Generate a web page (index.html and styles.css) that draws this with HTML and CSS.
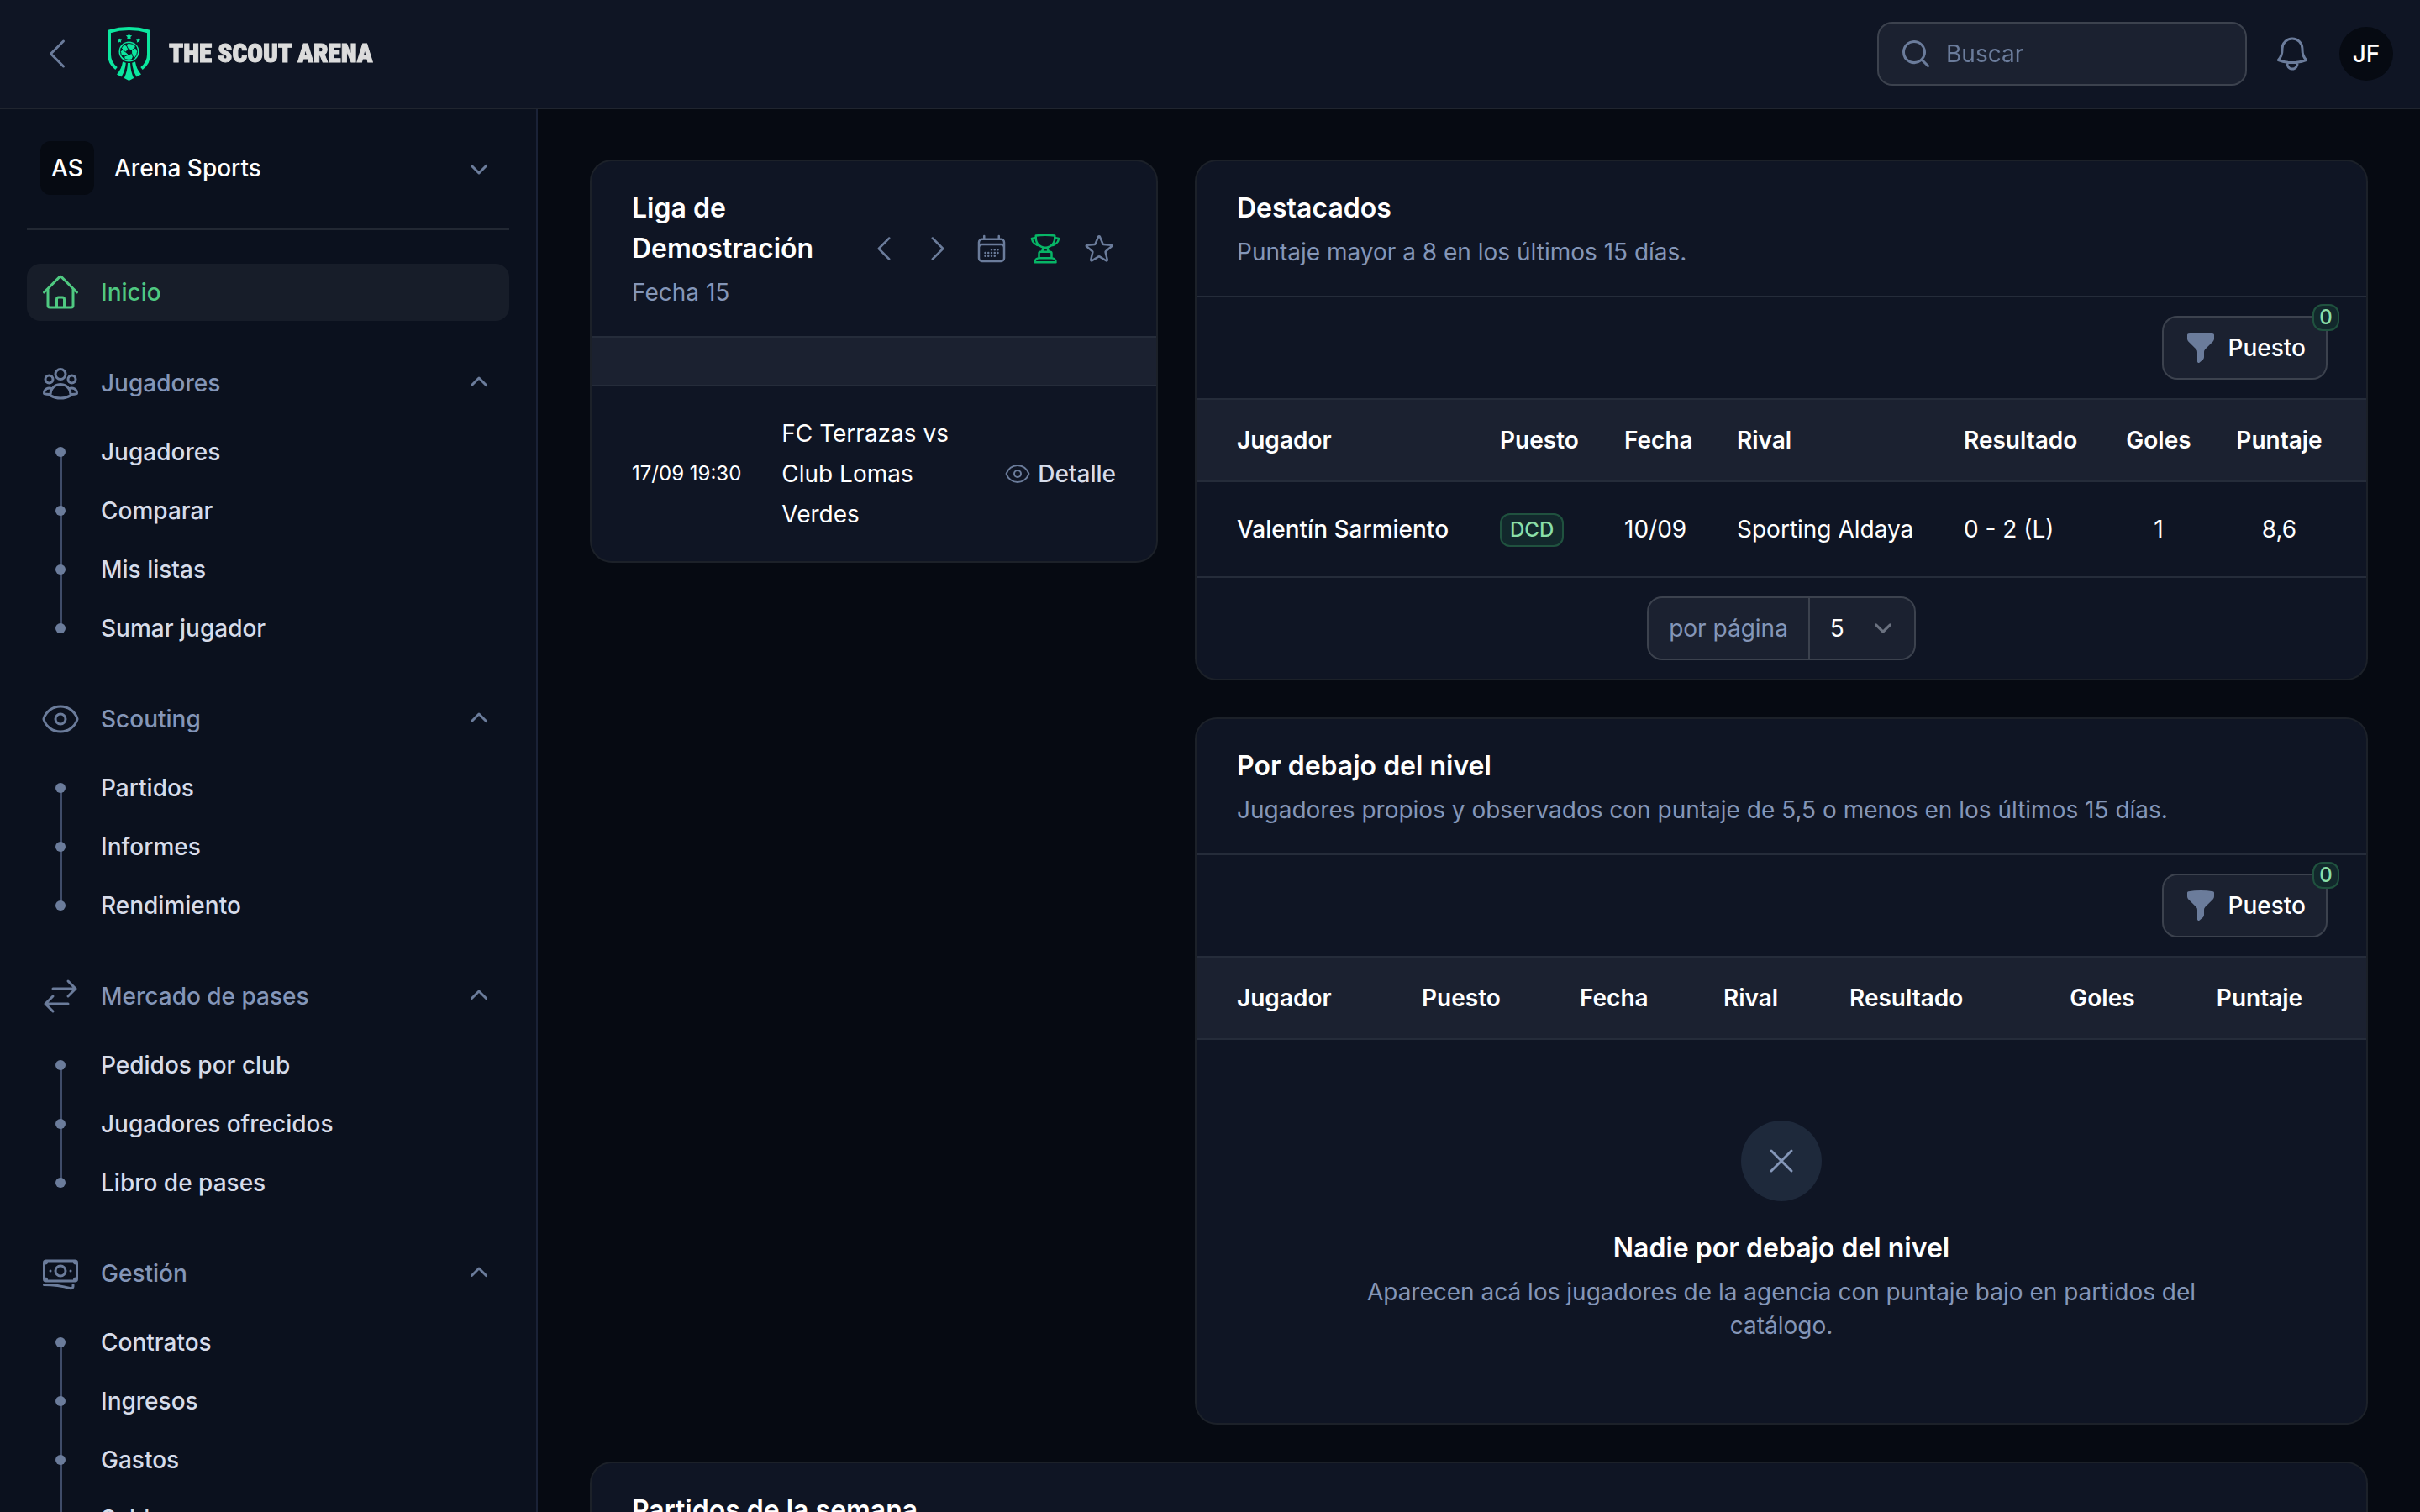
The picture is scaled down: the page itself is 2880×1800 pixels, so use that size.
FILE: index.html
```html
<!DOCTYPE html>
<html lang="es">
<head>
<meta charset="utf-8">
<meta name="viewport" content="width=device-width, initial-scale=1">
<title>Inicio - The Scout Arena</title>
<link rel="stylesheet" href="styles.css">
</head>
<body>
<svg class="sprite" aria-hidden="true">
  <symbol id="i-left" viewBox="0 0 24 24"><path d="M15.75 19.5 8.25 12l7.5-7.5"/></symbol>
  <symbol id="i-right" viewBox="0 0 24 24"><path d="m8.25 4.5 7.5 7.5-7.5 7.5"/></symbol>
  <symbol id="i-bell" viewBox="0 0 24 24"><path d="M14.857 17.082a23.848 23.848 0 0 0 5.454-1.31A8.967 8.967 0 0 1 18 9.75V9A6 6 0 0 0 6 9v.75a8.967 8.967 0 0 1-2.312 6.022c1.733.64 3.56 1.085 5.455 1.31m5.714 0a24.255 24.255 0 0 1-5.714 0m5.714 0a3 3 0 1 1-5.714 0"/></symbol>
  <symbol id="i-home" viewBox="0 0 24 24"><path d="m2.25 12 8.954-8.955c.44-.439 1.152-.439 1.591 0L21.75 12M4.5 9.75v10.125c0 .621.504 1.125 1.125 1.125H9.75v-4.875c0-.621.504-1.125 1.125-1.125h2.25c.621 0 1.125.504 1.125 1.125V21h4.125c.621 0 1.125-.504 1.125-1.125V9.75M8.25 21h8.25"/></symbol>
  <symbol id="i-users" viewBox="0 0 24 24"><path d="M18 18.72a9.094 9.094 0 0 0 3.741-.479 3 3 0 0 0-4.682-2.72m.94 3.198.001.031c0 .225-.012.447-.037.666A11.944 11.944 0 0 1 12 21c-2.17 0-4.207-.576-5.963-1.584A6.062 6.062 0 0 1 6 18.719m12 0a5.971 5.971 0 0 0-.941-3.197m0 0A5.995 5.995 0 0 0 12 12.75a5.995 5.995 0 0 0-5.058 2.772m0 0a3 3 0 0 0-4.681 2.72 8.986 8.986 0 0 0 3.74.477m.94-3.197a5.971 5.971 0 0 0-.94 3.197M15 6.75a3 3 0 1 1-6 0 3 3 0 0 1 6 0Zm6 3a2.25 2.25 0 1 1-4.5 0 2.25 2.25 0 0 1 4.5 0Zm-13.5 0a2.25 2.25 0 1 1-4.5 0 2.25 2.25 0 0 1 4.5 0Z"/></symbol>
  <symbol id="i-eye" viewBox="0 0 24 24"><path d="M2.036 12.322a1.012 1.012 0 0 1 0-.639C3.423 7.51 7.36 4.5 12 4.5c4.638 0 8.573 3.007 9.963 7.178.07.207.07.431 0 .639C20.577 16.49 16.64 19.5 12 19.5c-4.638 0-8.573-3.007-9.963-7.178Z"/><path d="M15 12a3 3 0 1 1-6 0 3 3 0 0 1 6 0Z"/></symbol>
  <symbol id="i-swap" viewBox="0 0 24 24"><path d="M7.5 21 3 16.5m0 0L7.5 12M3 16.5h13.5m0-13.5L21 7.5m0 0L16.5 12M21 7.5H7.5"/></symbol>
  <symbol id="i-cash" viewBox="0 0 24 24"><path d="M2.25 18.75a60.07 60.07 0 0 1 15.797 2.101c.727.198 1.453-.342 1.453-1.096V18.75M3.75 4.5v.75A.75.75 0 0 1 3 6h-.75m0 0v-.375c0-.621.504-1.125 1.125-1.125H20.25M2.25 6v9m18-10.5v.75c0 .414.336.75.75.75h.75m-1.5-1.5h.375c.621 0 1.125.504 1.125 1.125v9.75c0 .621-.504 1.125-1.125 1.125h-.375m1.5-1.5H21a.75.75 0 0 0-.75.75v.75m0 0H3.75m0 0h-.375a1.125 1.125 0 0 1-1.125-1.125V15m1.5 1.5v-.75A.75.75 0 0 0 3 15h-.75M15 10.5a3 3 0 1 1-6 0 3 3 0 0 1 6 0Zm3 0h.008v.008H18V10.5Zm-12 0h.008v.008H6V10.5Z"/></symbol>
  <symbol id="i-calendar" viewBox="0 0 24 24"><path d="M6.75 3v2.25M17.25 3v2.25M3 18.75V7.5a2.25 2.25 0 0 1 2.25-2.25h13.5A2.25 2.25 0 0 1 21 7.5v11.25m-18 0A2.25 2.25 0 0 0 5.25 21h13.5A2.25 2.25 0 0 0 21 18.75m-18 0v-7.5A2.25 2.25 0 0 1 5.25 9h13.5A2.25 2.25 0 0 1 21 11.25v7.5m-9-6h.008v.008H12v-.008ZM12 15h.008v.008H12V15Zm0 2.25h.008v.008H12v-.008ZM9.75 15h.008v.008H9.75V15Zm0 2.25h.008v.008H9.75v-.008ZM7.5 15h.008v.008H7.5V15Zm0 2.25h.008v.008H7.5v-.008Zm6.75-4.5h.008v.008h-.008v-.008Zm0 2.25h.008v.008h-.008V15Zm0 2.25h.008v.008h-.008v-.008Zm2.25-4.5h.008v.008H16.5v-.008Zm0 2.25h.008v.008H16.5V15Z"/></symbol>
  <symbol id="i-trophy" viewBox="0 0 24 24"><path d="M16.5 18.75h-9m9 0a3 3 0 0 1 3 3h-15a3 3 0 0 1 3-3m9 0v-3.375c0-.621-.503-1.125-1.125-1.125h-.871M7.5 18.75v-3.375c0-.621.504-1.125 1.125-1.125h.872m5.007 0H9.497m5.007 0a7.454 7.454 0 0 1-.982-3.172M9.497 14.25a7.454 7.454 0 0 0 .981-3.172M5.25 4.236c-.982.143-1.954.317-2.916.52A6.003 6.003 0 0 0 7.73 9.728M5.25 4.236V4.5c0 2.108.966 3.99 2.48 5.228M5.25 4.236V2.721C7.456 2.41 9.71 2.25 12 2.25c2.291 0 4.545.16 6.75.47v1.516M7.73 9.728a6.726 6.726 0 0 0 2.748 1.35m8.272-6.842V4.5c0 2.108-.966 3.99-2.48 5.228m2.48-5.492a46.32 46.32 0 0 1 2.916.52 6.003 6.003 0 0 1-5.395 4.972m0 0a6.726 6.726 0 0 1-2.749 1.35m0 0a6.772 6.772 0 0 1-3.044 0"/></symbol>
  <symbol id="i-star" viewBox="0 0 24 24"><path d="M11.48 3.499a.562.562 0 0 1 1.04 0l2.125 5.111a.563.563 0 0 0 .475.345l5.518.442c.499.04.701.663.321.988l-4.204 3.602a.563.563 0 0 0-.182.557l1.285 5.385a.562.562 0 0 1-.84.61l-4.725-2.885a.562.562 0 0 0-.586 0L6.982 20.54a.562.562 0 0 1-.84-.61l1.285-5.386a.562.562 0 0 0-.182-.557l-4.204-3.602a.562.562 0 0 1 .321-.988l5.518-.442a.563.563 0 0 0 .475-.345L11.48 3.5Z"/></symbol>
  <symbol id="i-x" viewBox="0 0 24 24"><path d="M6 18 18 6M6 6l12 12"/></symbol>
  <symbol id="i-search" viewBox="0 0 20 20"><path d="M9 3.5a5.5 5.5 0 1 0 0 11 5.5 5.5 0 0 0 0-11ZM2 9a7 7 0 1 1 12.452 4.391l3.328 3.329a.75.75 0 1 1-1.06 1.06l-3.329-3.328A7 7 0 0 1 2 9Z"/></symbol>
  <symbol id="i-down" viewBox="0 0 20 20"><path d="M5.22 8.22a.75.75 0 0 1 1.06 0L10 11.94l3.72-3.72a.75.75 0 1 1 1.06 1.06l-4.25 4.25a.75.75 0 0 1-1.06 0L5.22 9.28a.75.75 0 0 1 0-1.06Z"/></symbol>
  <symbol id="i-up" viewBox="0 0 20 20"><path d="M9.47 6.47a.75.75 0 0 1 1.06 0l4.25 4.25a.75.75 0 1 1-1.06 1.06L10 8.06l-3.72 3.72a.75.75 0 0 1-1.06-1.06l4.25-4.25Z"/></symbol>
  <symbol id="i-funnel" viewBox="0 0 20 20"><path d="M2.628 1.601C5.028 1.206 7.49 1 10 1s4.973.206 7.372.601a.75.75 0 0 1 .628.74v2.288a2.25 2.25 0 0 1-.659 1.59l-4.682 4.683a2.25 2.25 0 0 0-.659 1.59v3.037c0 .684-.31 1.33-.844 1.757l-1.937 1.55A.75.75 0 0 1 8 18.25v-5.757a2.25 2.25 0 0 0-.659-1.591L2.659 6.22A2.25 2.25 0 0 1 2 4.629V2.34a.75.75 0 0 1 .628-.74Z"/></symbol>
</svg>

<div class="app">
  <header class="topbar">
    <button class="icon-button" type="button" aria-label="Contraer barra lateral"><svg class="icon icon-lg"><use href="#i-left"/></svg></button>
    <a class="brand" href="#">
      <svg class="brand-mark" viewBox="0 0 51 64" aria-hidden="true">
        <path class="brand-shield" d="M10.500 49.500C4 44.500 2 39.500 2 33V5.500Q25.500 -1.300 49 5.500V33C49 39.500 47 44.500 40.500 49.500"/>
        <path d="m25.500 7.600 1.100 2.400 2.600.3-1.900 1.800.5 2.600-2.300-1.300-2.300 1.300.5-2.600-1.900-1.800 2.600-.3zM14.500 13.600l.8 1.700 1.900.2-1.400 1.300.4 1.900-1.700-.9-1.700.9.400-1.900-1.400-1.300 1.900-.2zM36.500 13.600l.8 1.700 1.900.2-1.400 1.300.4 1.900-1.700-.9-1.700.9.400-1.900-1.400-1.300 1.900-.2z"/>
        <circle cx="25.500" cy="29.500" r="12"/>
        <g class="brand-ball">
          <circle cx="25.500" cy="29.500" r="10"/>
          <path class="brand-ball-fill" d="m24.500 26.300 4 1.600.2 3.600-3.600 1.600-3.200-3zM19.600 20.600l3.600-.6-.6 2.600zM33.600 22.600l1.400 4-2.400-1.200zM32.500 37l-3.400 1.800 1.200-3zM19.800 37.400l-2.600-3.200 2.800.4zM16 28.400l.2-3.400 1.600 1.800z"/>
          <path d="m24.500 26.300-1.900-4M28.500 27.900l4.300-2.500M28.700 31.500l1.800 4.600M25.100 33.100 20 35M21.900 30.100l-4.300-3"/>
        </g>
        <path d="M24 43h3c.3 6.500 1.600 12.500 4.200 18L25.500 64l-5.700-3C22.400 55.500 23.700 49.500 24 43zM18 41.500l3.800 1.300C21.300 48.500 19.700 54.200 16.500 59.500L11 56.500C15 52 17.200 47 18 41.500zM33 41.500l-3.800 1.300c.5 5.700 2.100 11.400 5.300 16.700L40 56.500C36 52 33.800 47 33 41.500z"/>
      </svg>
      <span class="brand-name">THE SCOUT ARENA</span>
    </a>
    <div class="topbar-end">
      <label class="search">
        <svg class="icon-solid"><use href="#i-search"/></svg>
        <input type="search" placeholder="Buscar" aria-label="Buscar">
      </label>
      <button class="bell" type="button" aria-label="Notificaciones"><svg class="icon icon-lg"><use href="#i-bell"/></svg></button>
      <button class="avatar avatar-round" type="button">JF</button>
    </div>
  </header>

  <div class="body">
    <aside class="sidebar">
      <div class="tenant">
        <button class="tenant-button" type="button">
          <span class="avatar">AS</span>
          <span class="grow">Arena Sports</span>
          <svg class="icon-solid"><use href="#i-down"/></svg>
        </button>
      </div>
      <nav class="nav">
        <a class="nav-item nav-active" href="#"><svg class="icon icon-lg"><use href="#i-home"/></svg>Inicio</a>
        <section class="nav-group">
          <button class="nav-item nav-heading" type="button"><svg class="icon icon-lg"><use href="#i-users"/></svg><span class="grow">Jugadores</span><svg class="icon-solid"><use href="#i-up"/></svg></button>
          <ul>
            <li><a class="nav-item" href="#"><span class="dot"></span>Jugadores</a></li>
            <li><a class="nav-item" href="#"><span class="dot"></span>Comparar</a></li>
            <li><a class="nav-item" href="#"><span class="dot"></span>Mis listas</a></li>
            <li><a class="nav-item" href="#"><span class="dot"></span>Sumar jugador</a></li>
          </ul>
        </section>
        <section class="nav-group">
          <button class="nav-item nav-heading" type="button"><svg class="icon icon-lg"><use href="#i-eye"/></svg><span class="grow">Scouting</span><svg class="icon-solid"><use href="#i-up"/></svg></button>
          <ul>
            <li><a class="nav-item" href="#"><span class="dot"></span>Partidos</a></li>
            <li><a class="nav-item" href="#"><span class="dot"></span>Informes</a></li>
            <li><a class="nav-item" href="#"><span class="dot"></span>Rendimiento</a></li>
          </ul>
        </section>
        <section class="nav-group">
          <button class="nav-item nav-heading" type="button"><svg class="icon icon-lg"><use href="#i-swap"/></svg><span class="grow">Mercado de pases</span><svg class="icon-solid"><use href="#i-up"/></svg></button>
          <ul>
            <li><a class="nav-item" href="#"><span class="dot"></span>Pedidos por club</a></li>
            <li><a class="nav-item" href="#"><span class="dot"></span>Jugadores ofrecidos</a></li>
            <li><a class="nav-item" href="#"><span class="dot"></span>Libro de pases</a></li>
          </ul>
        </section>
        <section class="nav-group">
          <button class="nav-item nav-heading" type="button"><svg class="icon icon-lg"><use href="#i-cash"/></svg><span class="grow">Gestión</span><svg class="icon-solid"><use href="#i-up"/></svg></button>
          <ul>
            <li><a class="nav-item" href="#"><span class="dot"></span>Contratos</a></li>
            <li><a class="nav-item" href="#"><span class="dot"></span>Ingresos</a></li>
            <li><a class="nav-item" href="#"><span class="dot"></span>Gastos</a></li>
            <li><a class="nav-item" href="#"><span class="dot"></span>Saldos</a></li>
          </ul>
        </section>
      </nav>
    </aside>

    <main class="main">
      <section class="card">
        <header class="card-header">
          <div class="card-heading">
            <h2>Liga de Demostración</h2>
            <p>Fecha 15</p>
          </div>
          <div class="card-actions">
            <button type="button" aria-label="Fecha anterior"><svg class="icon"><use href="#i-left"/></svg></button>
            <button type="button" aria-label="Fecha siguiente"><svg class="icon"><use href="#i-right"/></svg></button>
            <button type="button" aria-label="Calendario"><svg class="icon"><use href="#i-calendar"/></svg></button>
            <button class="selected" type="button" aria-label="Torneo"><svg class="icon"><use href="#i-trophy"/></svg></button>
            <button type="button" aria-label="Favoritos"><svg class="icon"><use href="#i-star"/></svg></button>
          </div>
        </header>
        <div class="group-band"></div>
        <div class="match">
          <time class="match-time">17/09 19:30</time>
          <span class="grow">FC Terrazas vs Club Lomas Verdes</span>
          <a class="match-link" href="#"><svg class="icon icon-sm"><use href="#i-eye"/></svg>Detalle</a>
        </div>
      </section>

      <div class="column">
        <section class="card">
          <header class="card-header">
            <div class="card-heading">
              <h2>Destacados</h2>
              <p>Puntaje mayor a 8 en los últimos 15 días.</p>
            </div>
          </header>
          <div class="toolbar">
            <button class="filter" type="button"><svg class="icon-solid"><use href="#i-funnel"/></svg>Puesto<span class="badge badge-count">0</span></button>
          </div>
          <table>
            <colgroup><col class="a1"><col class="a2"><col class="a3"><col class="a4"><col class="a5"><col class="a6"><col class="a7"></colgroup>
            <thead>
              <tr><th>Jugador</th><th>Puesto</th><th>Fecha</th><th>Rival</th><th>Resultado</th><th class="center">Goles</th><th class="center">Puntaje</th></tr>
            </thead>
            <tbody>
              <tr><td class="strong">Valentín Sarmiento</td><td><span class="badge">DCD</span></td><td>10/09</td><td>Sporting Aldaya</td><td>0 - 2 (L)</td><td class="center">1</td><td class="center">8,6</td></tr>
            </tbody>
          </table>
          <footer class="pagination">
            <label class="per-page">
              <span>por página</span>
              <select><option>5</option><option>10</option><option>25</option></select>
            </label>
          </footer>
        </section>

        <section class="card">
          <header class="card-header">
            <div class="card-heading">
              <h2>Por debajo del nivel</h2>
              <p>Jugadores propios y observados con puntaje de 5,5 o menos en los últimos 15 días.</p>
            </div>
          </header>
          <div class="toolbar">
            <button class="filter" type="button"><svg class="icon-solid"><use href="#i-funnel"/></svg>Puesto<span class="badge badge-count">0</span></button>
          </div>
          <table>
            <colgroup><col class="b1"><col class="b2"><col class="b3"><col class="b4"><col class="b5"><col class="b6"><col class="b7"></colgroup>
            <thead>
              <tr><th>Jugador</th><th>Puesto</th><th>Fecha</th><th>Rival</th><th>Resultado</th><th class="center">Goles</th><th class="center">Puntaje</th></tr>
            </thead>
          </table>
          <div class="empty">
            <span class="empty-icon"><svg class="icon icon-lg"><use href="#i-x"/></svg></span>
            <h3>Nadie por debajo del nivel</h3>
            <p>Aparecen acá los jugadores de la agencia con puntaje bajo en partidos del catálogo.</p>
          </div>
        </section>
      </div>

      <section class="card card-wide">
        <header class="card-header">
          <div class="card-heading">
            <h2>Partidos de la semana</h2>
          </div>
        </header>
      </section>
    </main>
  </div>
</div>
</body>
</html>
```
FILE: styles.css
```css
:root {
  --page: #060a12;
  --surface: #0f1524;
  --sidebar: #0b111e;
  --band: #1b2130;
  --line: #252c3a;
  --ring: #1c2129;
  --control-ring: #3c424e;
  --icon: #6b7c9b;
  --muted: #8496b8;
  --text: #d6dcea;
}

* { box-sizing: border-box; }

body {
  margin: 0;
  background: var(--page);
  color: #fff;
  font-family: Inter, "Liberation Sans", sans-serif;
  font-optical-sizing: none;
  font-variation-settings: "opsz" 14;
  font-size: 28px;
  line-height: 40px;
}

h2, h3, p, ul { margin: 0; padding: 0; }
ul { list-style: none; }
a { color: inherit; text-decoration: none; }
button, input, select { font: inherit; font-variation-settings: inherit; color: inherit; }
button { border: 0; padding: 0; background: none; text-align: left; cursor: pointer; }

.sprite { display: none; }
.grow { flex: 1; min-width: 0; }

.icon, .icon-solid { display: block; flex: none; width: 40px; height: 40px; }
.icon { fill: none; stroke: currentColor; stroke-width: 1.5; stroke-linecap: round; stroke-linejoin: round; }
.icon-solid { fill: var(--icon); }
.icon-lg { width: 48px; height: 48px; }
.icon-sm { width: 32px; height: 32px; }

.app { display: flex; flex-direction: column; height: 100vh; overflow: hidden; }
.body { display: flex; flex: 1; min-height: 0; }

/* Top bar */
.topbar {
  position: relative;
  z-index: 1;
  display: flex;
  flex: none;
  align-items: center;
  height: 128px;
  padding: 0 32px;
  background: var(--surface);
  box-shadow: 0 2px 0 #20252f;
}
.icon-button { margin-right: 24px; padding: 12px; color: var(--icon); }
.brand { display: flex; align-items: center; gap: 22px; }
.brand-mark { display: block; width: 51px; height: 64px; fill: #0ce79f; }
.brand-shield { fill: none; stroke: #0ce79f; stroke-width: 4; }
.brand-ball { fill: none; stroke: var(--surface); stroke-width: 1; }
.brand-ball-fill { fill: var(--surface); }
.brand-name {
  color: #dcdcdc;
  font-family: "Liberation Sans Narrow", "Roboto Condensed", "Open Sans Condensed", "DejaVu Sans Condensed", sans-serif;
  font-size: 31px;
  font-weight: 900;
  -webkit-text-stroke: 1px #dcdcdc;
}
.topbar-end { display: flex; align-items: center; gap: 32px; margin-left: auto; }
.search {
  display: flex;
  align-items: center;
  gap: 16px;
  width: 436px;
  height: 72px;
  padding: 0 24px;
  border-radius: 16px;
  background: var(--band);
  box-shadow: 0 0 0 2px var(--control-ring);
}
.search input { width: 100%; min-width: 0; padding: 0; border: 0; outline: 0; background: none; appearance: none; }
.search input::placeholder { color: var(--icon); opacity: 1; }
.bell { color: var(--icon); }
.avatar {
  display: flex;
  flex: none;
  align-items: center;
  justify-content: center;
  width: 64px;
  height: 64px;
  border-radius: 12px;
  background: var(--page);
  color: #fff;
  font-weight: 500;
}
.avatar-round { border-radius: 50%; }

/* Sidebar */
.sidebar {
  flex: none;
  width: 640px;
  padding: 0 32px;
  border-right: 2px solid #1a2237;
  background: var(--sidebar);
  overflow-y: auto;
  scrollbar-width: none;
  font-weight: 500;
}
.tenant { padding: 40px 0; border-bottom: 2px solid #222833; }
.tenant-button { display: flex; align-items: center; gap: 24px; width: 100%; padding: 0 16px; font-weight: 500; }
.nav { display: flex; flex-direction: column; gap: 40px; padding: 40px 0; }
.nav-group ul { display: flex; flex-direction: column; gap: 2px; margin-top: 14px; }
.nav-item {
  display: flex;
  align-items: center;
  gap: 24px;
  width: 100%;
  height: 68px;
  padding: 0 16px;
  border-radius: 16px;
  color: var(--text);
  font-weight: 500;
}
.nav-active { background: #171d29; color: #4fc981; }
.nav-heading { color: var(--muted); }
.nav-heading .icon { color: var(--icon); }
.dot { position: relative; display: flex; align-items: center; justify-content: center; width: 48px; height: 68px; }
.dot::after { content: ""; position: relative; width: 12px; height: 12px; border-radius: 50%; background: var(--icon); }
li:not(:last-child) .dot::before {
  content: "";
  position: absolute;
  top: 50%;
  left: 50%;
  width: 2px;
  height: 70px;
  background: #3f4c69;
}

/* Dashboard */
.main {
  display: grid;
  flex: 1;
  grid-template-columns: repeat(3, minmax(0, 1fr));
  align-content: start;
  align-items: start;
  gap: 48px;
  padding: 64px;
  overflow-y: auto;
  scrollbar-width: none;
}
.column { display: flex; grid-column: span 2; flex-direction: column; gap: 48px; }
.card { border-radius: 24px; background: var(--surface); box-shadow: 0 0 0 2px var(--ring); }
.card-wide { grid-column: 1 / -1; }
.card-header { display: flex; align-items: center; gap: 24px; padding: 32px 48px; }
.card-heading { display: grid; flex: 1; gap: 8px; min-width: 0; }
.card-heading h2 { font-size: 32px; font-weight: 600; line-height: 48px; }
.card-heading p { color: var(--muted); }
.card-actions { display: flex; gap: 24px; color: var(--icon); }
.card-actions button { color: inherit; }
.card-actions .selected { color: #07b566; }

.group-band { height: 60px; border: solid var(--line); border-width: 2px 0; background: var(--band); }
.match { display: flex; align-items: center; gap: 48px; padding: 32px 48px; line-height: 48px; }
.match-time { font-size: 24px; }
.match-link { display: flex; align-items: center; gap: 8px; color: var(--text); font-weight: 500; }
.match-link .icon { color: var(--icon); }

.toolbar { display: flex; justify-content: flex-end; padding: 24px 48px; border-top: 2px solid var(--line); }
.filter {
  position: relative;
  display: flex;
  align-items: center;
  gap: 12px;
  height: 72px;
  padding: 0 24px;
  border-radius: 16px;
  background: var(--band);
  box-shadow: 0 0 0 2px var(--control-ring);
  font-weight: 500;
}
.badge {
  display: inline-block;
  padding: 4px 12px;
  border-radius: 12px;
  background: #12282c;
  box-shadow: inset 0 0 0 2px #20523f;
  color: #8adfa8;
  font-size: 24px;
  font-weight: 500;
  line-height: 32px;
  vertical-align: middle;
}
.badge-count { position: absolute; top: -16px; right: -16px; width: 32px; padding: 0; text-align: center; }

table { width: 100%; border-collapse: separate; border-spacing: 0; table-layout: fixed; }
th, td { padding: 0 24px; text-align: left; white-space: nowrap; }
th { height: 100px; border: solid var(--line); border-width: 2px 0; background: var(--band); font-weight: 600; }
td { height: 112px; }
th:first-child, td:first-child { padding-left: 48px; }
th:last-child, td:last-child { padding-right: 48px; }
.center { text-align: center; }
.strong { font-weight: 500; }
.a1 { width: 337px; } .a2 { width: 148px; } .a3 { width: 134px; } .a4 { width: 270px; }
.a5 { width: 192px; } .a6 { width: 128px; } .a7 { width: 183px; }
.b1 { width: 244px; } .b2 { width: 188px; } .b3 { width: 171px; } .b4 { width: 150px; }
.b5 { width: 241px; } .b6 { width: 168px; } .b7 { width: 230px; }

.pagination { display: flex; justify-content: center; padding: 24px 48px; border-top: 2px solid var(--line); }
.per-page {
  display: flex;
  align-items: center;
  height: 72px;
  border-radius: 16px;
  background: var(--band);
  box-shadow: 0 0 0 2px var(--control-ring);
  color: var(--muted);
}
.per-page span { padding: 0 24px; }
.per-page select {
  width: 126px;
  height: 72px;
  padding: 0 24px;
  border: 0;
  border-left: 2px solid var(--control-ring);
  outline: 0;
  appearance: none;
  color: #fff;
  background: url("data:image/svg+xml,%3Csvg xmlns='http://www.w3.org/2000/svg' fill='none' viewBox='0 0 20 20'%3E%3Cpath stroke='%236b7280' stroke-linecap='round' stroke-linejoin='round' stroke-width='1.5' d='m6 8 4 4 4-4'/%3E%3C/svg%3E") no-repeat right 16px center / 42px;
}

.empty { display: flex; flex-direction: column; align-items: center; padding: 96px 48px; text-align: center; }
.empty-icon {
  display: flex;
  align-items: center;
  justify-content: center;
  width: 96px;
  height: 96px;
  margin-bottom: 32px;
  border-radius: 50%;
  background: #1e293b;
  color: var(--muted);
}
.empty h3 { margin-bottom: 8px; font-size: 32px; font-weight: 600; line-height: 48px; }
.empty p { max-width: 1024px; color: var(--muted); }
```
